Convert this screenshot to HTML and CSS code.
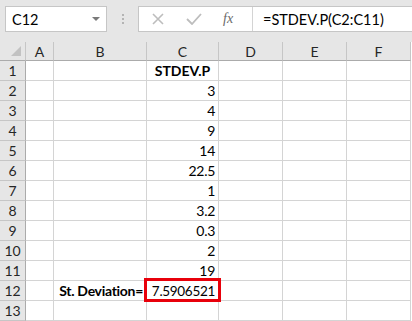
FILE: index.html
```html
<!DOCTYPE html>
<html lang="en">

<head>
    <meta charset="UTF-8" />
    <title>STDEV.P</title>
    <link rel="stylesheet" href="styles.css">
</head>

<body>

    <!-- formula bar -->
    <div class="formula-bar">
        <div class="name-box">
            <span>C12</span>
            <span class="drop"></span>
        </div>
        <div class="dots"><i></i><i></i><i></i></div>
        <div class="formula-box">
            <div class="tools">
                <svg width="12" height="12" viewBox="0 0 12 12">
                    <path d="M1 1 L11 11 M11 1 L1 11" stroke="#bdbdbd" stroke-width="1.6" fill="none" />
                </svg>
                <svg width="16" height="12" viewBox="0 0 16 12">
                    <path d="M1 6 L6 11 L15 1" stroke="#bdbdbd" stroke-width="1.8" fill="none" />
                </svg>
                <span class="fx">fx</span>
            </div>
            <div class="formula">=STDEV.P(C2:C11)</div>
        </div>
    </div>

    <!-- sheet -->
    <div class="sheet">
        <div class="hd corner"><span class="tri"></span></div>
        <div class="hd">A</div>
        <div class="hd">B</div>
        <div class="hd">C</div>
        <div class="hd">D</div>
        <div class="hd">E</div>
        <div class="hd">F</div>

        <div class="rh">1</div><div class="c"></div><div class="c"></div><div class="c bold center">STDEV.P</div><div class="c"></div><div class="c"></div><div class="c"></div>
        <div class="rh">2</div><div class="c"></div><div class="c"></div><div class="c num">3</div><div class="c"></div><div class="c"></div><div class="c"></div>
        <div class="rh">3</div><div class="c"></div><div class="c"></div><div class="c num">4</div><div class="c"></div><div class="c"></div><div class="c"></div>
        <div class="rh">4</div><div class="c"></div><div class="c"></div><div class="c num">9</div><div class="c"></div><div class="c"></div><div class="c"></div>
        <div class="rh">5</div><div class="c"></div><div class="c"></div><div class="c num">14</div><div class="c"></div><div class="c"></div><div class="c"></div>
        <div class="rh">6</div><div class="c"></div><div class="c"></div><div class="c num">22.5</div><div class="c"></div><div class="c"></div><div class="c"></div>
        <div class="rh">7</div><div class="c"></div><div class="c"></div><div class="c num">1</div><div class="c"></div><div class="c"></div><div class="c"></div>
        <div class="rh">8</div><div class="c"></div><div class="c"></div><div class="c num">3.2</div><div class="c"></div><div class="c"></div><div class="c"></div>
        <div class="rh">9</div><div class="c"></div><div class="c"></div><div class="c num">0.3</div><div class="c"></div><div class="c"></div><div class="c"></div>
        <div class="rh">10</div><div class="c"></div><div class="c"></div><div class="c num">2</div><div class="c"></div><div class="c"></div><div class="c"></div>
        <div class="rh">11</div><div class="c"></div><div class="c"></div><div class="c num">19</div><div class="c"></div><div class="c"></div><div class="c"></div>
        <div class="rh">12</div><div class="c"></div><div class="c bold num">St. Deviation=</div><div class="c num result">7.5906521</div><div class="c"></div><div class="c"></div><div class="c"></div>
        <div class="rh">13</div><div class="c"></div><div class="c"></div><div class="c"></div><div class="c"></div><div class="c"></div><div class="c"></div>
    </div>

</body>

</html>
```

FILE: styles.css
```css
body {
    margin: 0;
    width: 412px;
    height: 321px;
    overflow: hidden;
    background: #e6e6e6;
    font-family: Lato, 'Noto Sans', sans-serif;
    font-size: 14px;
    color: #000;
}

.formula-bar {
    display: flex;
    align-items: center;
    height: 26px;
    padding: 6px 0 10px 5px;
}

.name-box {
    box-sizing: border-box;
    width: 102px;
    height: 26px;
    background: #fff;
    border: 1px solid #c6c6c6;
    display: flex;
    align-items: center;
    justify-content: space-between;
    padding: 0 6px 0 6px;
    font-size: 14.5px;
}

.drop {
    width: 0;
    height: 0;
    border-left: 4px solid transparent;
    border-right: 4px solid transparent;
    border-top: 4px solid #7a7a7a;
}

.dots {
    width: 31px;
    display: flex;
    flex-direction: column;
    align-items: center;
    gap: 2px;
}

.dots i {
    width: 2px;
    height: 2px;
    background: #b4b4b4;
}

.formula-box {
    flex: 1;
    box-sizing: border-box;
    height: 26px;
    background: #fff;
    border: 1px solid #c6c6c6;
    border-right: none;
    display: flex;
    align-items: center;
}

.tools {
    box-sizing: border-box;
    width: 114px;
    height: 100%;
    border-right: 1px solid #d4d4d4;
    display: flex;
    align-items: center;
    padding-left: 13px;
    gap: 22px;
}

.fx {
    font-family: 'Liberation Serif', serif;
    font-style: italic;
    font-size: 14px;
    color: #6a6a6a;
    margin-left: -1px;
}

.formula {
    padding-left: 10px;
    font-size: 14.5px;
}

.sheet {
    display: grid;
    grid-template-columns: 26px 28px 93px 72px 64px 64px 64px;
    grid-template-rows: 19px repeat(13, 20px);
    background: #fff;
}

.hd {
    box-sizing: border-box;
    background: #e6e6e6;
    border-right: 1px solid #c6c6c6;
    border-bottom: 1px solid #ababab;
    display: flex;
    align-items: center;
    justify-content: center;
    color: #262626;
}

.corner {
    position: relative;
}

.tri {
    position: absolute;
    right: 4px;
    bottom: 4px;
    width: 0;
    height: 0;
    border-left: 10px solid transparent;
    border-bottom: 10px solid #c2c2c2;
}

.rh {
    box-sizing: border-box;
    background: #e6e6e6;
    border-right: 1px solid #ababab;
    border-bottom: 1px solid #c6c6c6;
    display: flex;
    align-items: center;
    justify-content: center;
    color: #262626;
}

.c {
    box-sizing: border-box;
    border-right: 1px solid #d4d4d4;
    border-bottom: 1px solid #d4d4d4;
    display: flex;
    align-items: flex-end;
    padding: 0 3px 0 3px;
    white-space: nowrap;
    line-height: 18px;
}

.num {
    justify-content: flex-end;
    letter-spacing: -0.3px;
}

.center {
    justify-content: center;
}

.bold {
    font-weight: bold;
}

.result {
    position: relative;
    font-size: 13.5px;
}

.result::after {
    content: '';
    position: absolute;
    top: -3px;
    left: -3px;
    right: -3px;
    bottom: -2px;
    border: 3px solid #e8000b;
}
```
